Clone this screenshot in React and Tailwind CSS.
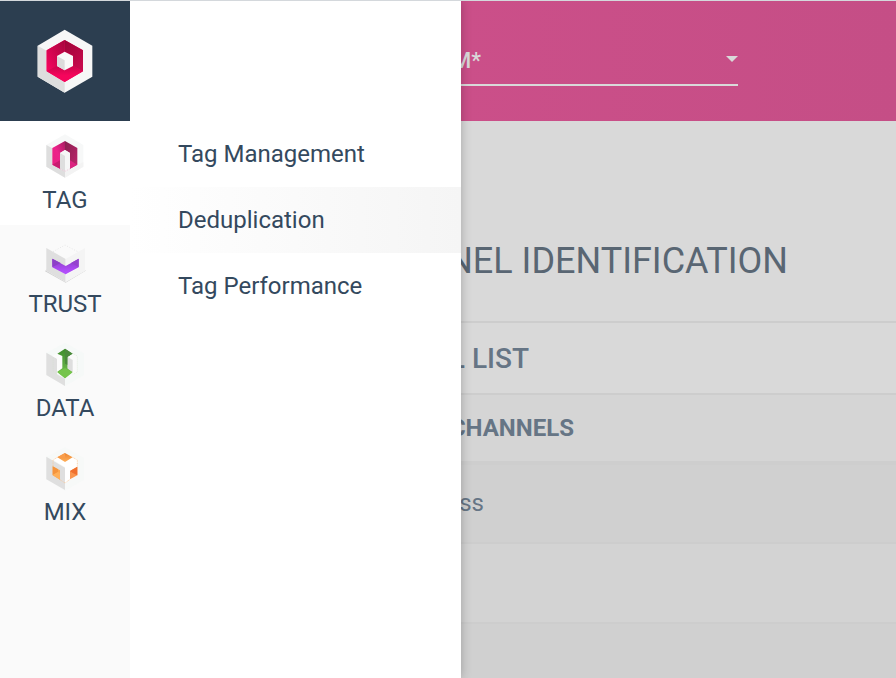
import React from "react";

function Logo() {
  return (
    <svg className="h-20 w-20" viewBox="0 0 240 240">
      <path d="M119 29 202 77V170L119 218 38 170V77Z" fill="#f7f7f7" />
      <path d="M38 77 65 92V154L119 186V218L38 170Z" fill="#dedede" />
      <path d="M119 60 174 91V154L119 186 65 154V91Z" fill="#f5055c" />
      <path d="M119 60 174 91V154L145 138 144 108 119 95Z" fill="url(#logoR)" />
      <path d="M119 60V95L96 109V138L65 154V91Z" fill="url(#logoL)" />
      <path d="M65 154 96 137 119 150 144 137 174 154 119 186Z" fill="url(#logoB)" />
      <path d="M119 95 144 108V138L119 151 96 138V108Z" fill="#f9f9f9" />
      <path d="M96 108 119 121V151L96 138Z" fill="#dcdcdc" />
      <defs>
        <linearGradient id="logoR" x1="0" y1="0" x2="0.6" y2="1">
          <stop stopColor="#9c0538" />
          <stop offset="1" stopColor="#c60a4c" />
        </linearGradient>
        <linearGradient id="logoL" x1="1" y1="0" x2="0" y2="1">
          <stop stopColor="#a5063d" />
          <stop offset="1" stopColor="#fa0560" />
        </linearGradient>
        <linearGradient id="logoB" x1="0" y1="0" x2="0" y2="1">
          <stop stopColor="#c8064b" />
          <stop offset="0.6" stopColor="#f5055c" />
        </linearGradient>
      </defs>
    </svg>
  );
}

function TagIcon() {
  return (
    <svg className="h-[50px] w-[60px]" viewBox="0 0 180 150">
      <path d="M90 13 145 45V110L90 143 34 110V45Z" fill="#f7f8f8" />
      <path d="M34 45 52 55V104L90 124V143L34 110Z" fill="#dedede" />
      <path d="M90 124 145 96V110L90 143Z" fill="#f3f3f3" />
      <path d="M90 33 52 54V104L75 116V69L90 60Z" fill="url(#tagL)" />
      <path d="M90 33 127 54V104L105 116V69L90 60Z" fill="url(#tagR)" />
      <path d="M52 104 75 91V116Z" fill="#c81c70" />
      <path d="M127 104 105 91V116Z" fill="#dc2380" />
      <path d="M75 69 90 60 105 69V116L90 124 75 116Z" fill="#f6f6f6" />
      <path d="M75 69 90 78V124L75 116Z" fill="#dedede" />
      <path d="M75 116 90 124 105 116" fill="none" stroke="#efb1cf" strokeWidth="2" strokeDasharray="3 3" />
      <defs>
        <linearGradient id="tagL" x1="1" y1="0" x2="0" y2="1">
          <stop stopColor="#a61d60" />
          <stop offset="0.5" stopColor="#ed218a" />
          <stop offset="1" stopColor="#e6207f" />
        </linearGradient>
        <linearGradient id="tagR" x1="0" y1="0" x2="1" y2="1">
          <stop stopColor="#87204f" />
          <stop offset="1" stopColor="#c0246c" />
        </linearGradient>
      </defs>
    </svg>
  );
}

function TrustIcon() {
  return (
    <svg className="h-[50px] w-[60px]" viewBox="0 0 180 150">
      <path d="M36 98 30 106 92 140 152 104 147 98 92 125Z" fill="#d3d3d3" style={{ filter: "blur(1.5px)" }} />
      <path d="M34 36 92 4 150 36V104L92 138 34 104Z" fill="#fafafa" />
      <path d="M34 36 92 69V138L34 104Z" fill="#dfdfdf" />
      <path d="M92 88 131 68V96L92 117V138L150 104V36L92 69Z" fill="#f4f4f4" />
      <path d="M52 68 92 90 131 68V94L92 115 52 94Z" fill="url(#trustFill)" />
      <path d="M52 68 77 81 52 93Z" fill="#8d3fc7" />
      <path d="M131 68 108 81 131 93Z" fill="#9443ce" />
      <path d="M54 47 90 27 130 48" fill="none" stroke="#dddddd" strokeWidth="2" strokeDasharray="3 5" />
      <defs>
        <linearGradient id="trustFill" x1="0" y1="0" x2="0" y2="1">
          <stop stopColor="#8a3dc3" />
          <stop offset="0.7" stopColor="#ac4bf4" />
          <stop offset="1" stopColor="#b651ff" />
        </linearGradient>
      </defs>
    </svg>
  );
}

function DataIcon() {
  return (
    <svg className="h-[50px] w-[60px]" viewBox="0 0 180 150">
      <path d="M90 8 147 40V106L90 138 34 105V38Z" fill="#f6f9f8" />
      <path d="M34 38 66 56V103L90 116V138L34 105Z" fill="#dfdfdf" />
      <path d="M52 48 67 40 82 48V94L66 103V56Z" fill="#fbfbfb" />
      <path d="M90 26 113 41 98 51V85L113 95 90 115 67 95 82 85V48L67 41Z" fill="url(#dataFill)" />
      <path d="M90 26 113 41 98 51V75L90 71Z" fill="#4b8a3c" />
      <path d="M67 97 90 84 113 97 90 115Z" fill="#75c44c" />
      <path d="M98 51 113 42 127 50V96L113 103V60Z" fill="#fafafa" />
      <path d="M98 51 113 60V96L98 86Z" fill="#dedede" />
      <path d="M113 40 127 48V96L113 104M67 103 54 94V50" fill="none" stroke="#d2e3cd" strokeWidth="1.5" strokeDasharray="3 3" />
      <defs>
        <linearGradient id="dataFill" x1="0" y1="0" x2="0" y2="1">
          <stop stopColor="#3d8b2b" />
          <stop offset="0.5" stopColor="#5ba842" />
          <stop offset="1" stopColor="#78c84c" />
        </linearGradient>
      </defs>
    </svg>
  );
}

function MixIcon() {
  return (
    <svg className="h-[50px] w-[60px]" viewBox="0 0 180 150">
      <path d="M90 10 147 42V108L90 140 34 106V38Z" fill="#f7f9f8" />
      <path d="M34 38 90 71V138L34 106Z" fill="#dfdfdf" />
      <path d="M54 47 90 27 127 47V94L90 117 90 69Z" fill="#ffffff" />
      <path d="M67 40 90 27 113 40 90 54Z" fill="url(#mixTop)" />
      <path d="M90 27V42L67 40Z" fill="#f99d4b" />
      <path d="M53 67 75 79V107L53 94Z" fill="#fca74f" />
      <path d="M53 67 69 76V84L53 93Z" fill="#f5943d" />
      <path d="M53 93 69 84 75 87V107Z" fill="#ffb05a" />
      <path d="M105 81 127 68V94L105 106Z" fill="#fa9650" />
      <path d="M105 81 127 68V94L112 86Z" fill="#f0712f" />
      <path d="M67 40 54 48V67M113 40 127 48V68M75 107 90 117 105 106" fill="none" stroke="#fac38d" strokeWidth="2" strokeDasharray="3 2" />
      <defs>
        <linearGradient id="mixTop" x1="0" y1="0" x2="0" y2="1">
          <stop stopColor="#ed8530" />
          <stop offset="1" stopColor="#ffb05a" />
        </linearGradient>
      </defs>
    </svg>
  );
}

const products = [
  { name: "TAG", Icon: TagIcon, style: "bg-white pt-[9px]", label: "mt-1" },
  { name: "TRUST", Icon: TrustIcon, style: "pt-[11px]", label: "mt-0.5" },
  { name: "DATA", Icon: DataIcon, style: "pt-[11px]", label: "mt-0.5" },
  { name: "MIX", Icon: MixIcon, style: "pt-[11px]", label: "mt-0.5" },
];

function Rail() {
  return (
    <nav className="z-20 flex w-[130px] shrink-0 flex-col bg-[#fafafa]">
      <div className="flex h-[120px] justify-center bg-[#2c3e50] pt-[19px]">
        <Logo />
      </div>
      {products.map(({ name, Icon, style, label }) => (
        <div key={name} className={`flex h-[104px] flex-col items-center ${style}`}>
          <Icon />
          <span className={`text-[24px] leading-8 ${label}`}>{name}</span>
        </div>
      ))}
    </nav>
  );
}

function Menu() {
  return (
    <div className="z-10 flex w-[331px] shrink-0 flex-col bg-white pt-[120px] text-[24px] shadow-[0_0_10px_rgba(0,0,0,0.25)]">
      <div className="flex h-[66px] items-center pl-12">Tag Management</div>
      <div className="flex h-[66px] items-center bg-linear-to-r from-white to-[#f5f5f5] pl-12">Deduplication</div>
      <div className="flex h-[66px] items-center pl-12">Tag Performance</div>
    </div>
  );
}

function Content() {
  return (
    <main className="flex min-w-0 flex-1 flex-col overflow-hidden bg-[#d9d9d9] text-[#667585]">
      <header className="h-[120px] shrink-0 bg-linear-to-r from-[#cb4f89] to-[#c54e86]">
        <div className="flex h-[85px] w-[277px] items-end justify-between border-b-2 border-[#d9d9d9] pb-[7px] text-[#d9d9d9]">
          <div className="flex w-5 justify-end text-[22px] leading-8 font-medium">M*</div>
          <svg className="mb-[15px] h-1.5 w-3" viewBox="0 0 12 6">
            <path d="M0 0h12L6 6Z" fill="currentColor" />
          </svg>
        </div>
      </header>
      <div className="flex h-[202px] shrink-0 items-end border-b-2 border-[#cdcdcd] pb-[36px]">
        <h1 className="flex w-[327px] justify-end text-[36px] leading-[48px] whitespace-nowrap text-[#596673]">
          NEL IDENTIFICATION
        </h1>
      </div>
      <div className="flex h-[72px] shrink-0 items-center border-b-2 border-[#cdcdcd] pt-0.5">
        <h2 className="flex w-[68px] justify-end text-[28px] font-medium whitespace-nowrap">L LIST</h2>
      </div>
      <div className="flex h-[70px] shrink-0 items-center border-b-4 border-[#cecece] bg-[#d5d5d5]">
        <h3 className="flex w-[113px] justify-end text-[24px] font-bold whitespace-nowrap">CHANNELS</h3>
      </div>
      <div className="flex h-[79px] shrink-0 items-center border-b-2 border-[#cdcdcd] bg-[#d0d0d0] pb-0.5">
        <span className="flex w-[23px] justify-end text-[24px]">ss</span>
      </div>
      <div className="h-20 shrink-0 border-b-2 border-[#cdcdcd] bg-[#d3d3d3]" />
      <div className="flex-1 bg-[#d0d0d0]" />
    </main>
  );
}

export default function App() {
  return (
    <div className="flex h-[678px] w-[896px] overflow-hidden border-t border-[#d4d8dc] bg-white font-['Roboto',sans-serif] text-[#34495e]">
      <Rail />
      <Menu />
      <Content />
    </div>
  );
}
